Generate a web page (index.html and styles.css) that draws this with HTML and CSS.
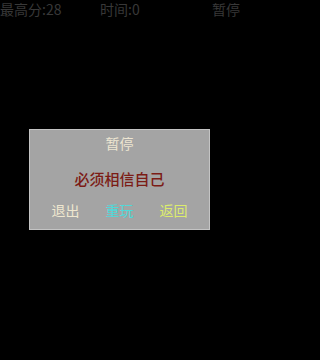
FILE: index.html
```html
<!DOCTYPE html>
<html lang="zh">
<head>
<meta charset="utf-8">
<link rel="stylesheet" href="styles.css">
</head>
<body>
<div class="screen">
  <div class="topbar">
    <span class="best">最高分:28</span>
    <span class="time">时间:0</span>
    <span class="pause">暂停</span>
  </div>
  <div class="dialog">
    <div class="title">暂停</div>
    <div class="msg">必须相信自己</div>
    <div class="actions">
      <span class="btn quit">退出</span>
      <span class="btn replay">重玩</span>
      <span class="btn back">返回</span>
    </div>
  </div>
</div>
</body>
</html>
```

FILE: styles.css
```css
html, body {
  margin: 0;
  padding: 0;
  background: #000;
}
.screen {
  width: 240px;
  height: 360px;
  background: #000;
  font-family: "Noto Sans CJK SC", "Noto Sans", sans-serif;
  display: flex;
  flex-direction: column;
}
.topbar {
  display: grid;
  grid-template-columns: 100px 1fr auto;
  height: 16px;
  font-size: 14px;
  line-height: 16px;
  color: #383838;
  margin-top: 1px;
}
.dialog {
  box-sizing: border-box;
  width: 181px;
  height: 101px;
  margin: 112px 0 0 29px;
  background: #a4a4a4;
  border: 1px solid #c4c4c4;
  display: flex;
  flex-direction: column;
  align-items: center;
  padding-top: 3px;
}
.title {
  font-size: 14px;
  line-height: 20px;
  color: #eee6d2;
}
.msg {
  margin-top: 16px;
  font-size: 15px;
  line-height: 20px;
  color: #7c1c16;
  font-weight: 500;
}
.actions {
  margin-top: 11px;
  display: grid;
  grid-template-columns: repeat(3, 54px);
  justify-content: center;
  width: 100%;
  font-size: 14px;
  line-height: 20px;
  text-align: center;
}
.quit { color: #efe7cf; }
.replay { color: #4fdada; }
.back { color: #dcec6c; }
```
